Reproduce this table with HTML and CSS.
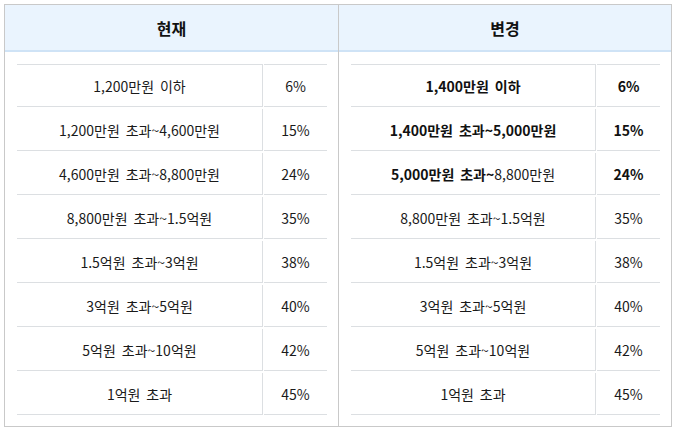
FILE: index.html
```html
<!DOCTYPE html>
<html lang="ko">
<head>
<meta charset="utf-8">
<link rel="stylesheet" href="styles.css">
</head>
<body>
<div class="compare">
  <div class="col">
    <div class="head">현재</div>
    <div class="body">
      <div class="rates">
        <div class="row"><div class="range">1,200만원 이하</div><div class="rate">6%</div></div>
        <div class="row"><div class="range">1,200만원 초과~4,600만원</div><div class="rate">15%</div></div>
        <div class="row"><div class="range">4,600만원 초과~8,800만원</div><div class="rate">24%</div></div>
        <div class="row"><div class="range">8,800만원 초과~1.5억원</div><div class="rate">35%</div></div>
        <div class="row"><div class="range">1.5억원 초과~3억원</div><div class="rate">38%</div></div>
        <div class="row"><div class="range">3억원 초과~5억원</div><div class="rate">40%</div></div>
        <div class="row"><div class="range">5억원 초과~10억원</div><div class="rate">42%</div></div>
        <div class="row"><div class="range">1억원 초과</div><div class="rate">45%</div></div>
      </div>
    </div>
  </div>
  <div class="col col-right">
    <div class="head">변경</div>
    <div class="body">
      <div class="rates">
        <div class="row"><div class="range"><b>1,400만원 이하</b></div><div class="rate"><b>6%</b></div></div>
        <div class="row"><div class="range"><b>1,400만원 초과~5,000만원</b></div><div class="rate"><b>15%</b></div></div>
        <div class="row"><div class="range"><b>5,000만원 초과~</b>8,800만원</div><div class="rate"><b>24%</b></div></div>
        <div class="row"><div class="range">8,800만원 초과~1.5억원</div><div class="rate">35%</div></div>
        <div class="row"><div class="range">1.5억원 초과~3억원</div><div class="rate">38%</div></div>
        <div class="row"><div class="range">3억원 초과~5억원</div><div class="rate">40%</div></div>
        <div class="row"><div class="range">5억원 초과~10억원</div><div class="rate">42%</div></div>
        <div class="row"><div class="range">1억원 초과</div><div class="rate">45%</div></div>
      </div>
    </div>
  </div>
</div>
</body>
</html>
```

FILE: styles.css
```css
html, body {
  margin: 0;
  padding: 0;
  background: #ffffff;
}

body {
  font-family: "Noto Sans CJK KR", "Noto Sans", sans-serif;
  color: #1a1a1a;
}

.compare {
  margin: 4px;
  width: 666px;
  border: 1px solid #c9c9c9;
  display: grid;
  grid-template-columns: 333px 333px;
}

.col {
  display: flex;
  flex-direction: column;
}

.col-right {
  border-left: 1px solid #c9c9c9;
}

.head {
  height: 45px;
  background: #eaf4fe;
  border-bottom: 2px solid #cfe3f6;
  display: flex;
  align-items: center;
  justify-content: center;
  font-size: 16px;
  font-weight: 700;
  color: #111111;
}

.body {
  padding: 12px 11px 11px 12px;
}

.rates {
  display: flex;
  flex-direction: column;
  gap: 2px;
}

.row {
  display: grid;
  grid-template-columns: 1fr 63px;
  column-gap: 1px;
}

.row > div {
  height: 41px;
  border-bottom: 1px solid #dcdfe2;
  display: flex;
  align-items: center;
  justify-content: center;
  font-size: 14px;
  word-spacing: 2px;
  white-space: pre;
}

.row:first-child > div {
  border-top: 1px solid #dcdfe2;
}

.row .range {
  border-right: 1px solid #dcdfe2;
}

.row b {
  font-weight: 700;
  color: #111111;
}
```
